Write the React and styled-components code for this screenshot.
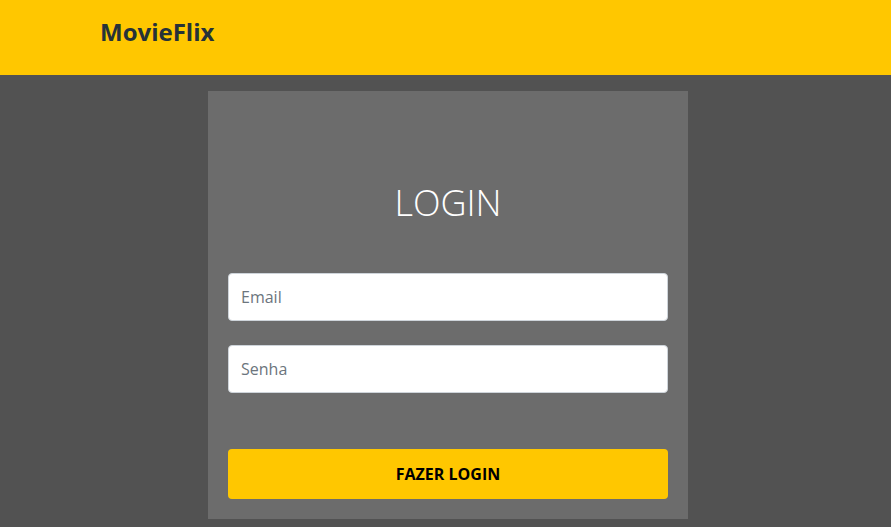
import React from 'react';
import styled, { createGlobalStyle } from 'styled-components';

const GlobalStyle = createGlobalStyle`
  * { box-sizing: border-box; }
  body {
    margin: 0;
    background: #525252;
    font-family: "Open Sans", "Liberation Sans", sans-serif;
  }
`;

export default function App() {
  return (
    <>
      <GlobalStyle />
      <Navbar>
        <Logo>MovieFlix</Logo>
      </Navbar>
      <Main>
        <Card>
          <Title>LOGIN</Title>
          <Form onSubmit={(e) => e.preventDefault()}>
            <Input type="email" placeholder="Email" />
            <Input type="password" placeholder="Senha" />
            <Button type="submit">Fazer login</Button>
          </Form>
        </Card>
      </Main>
    </>
  );
}

const Navbar = styled.header`
  height: 75px;
  background: #ffc700;
  display: flex;
  align-items: center;
  padding-left: 100px;
`;

const Logo = styled.h1`
  margin: 0 0 12px;
  font-size: 24px;
  font-weight: 700;
  color: #263238;
`;

const Main = styled.main`
  display: flex;
  justify-content: center;
  padding: 16px 0 0 5px;
`;

const Card = styled.section`
  width: 480px;
  background: #6c6c6c;
  padding: 87px 20px 20px;
`;

const Title = styled.h2`
  margin: 0 0 45px;
  text-align: center;
  font-size: 36px;
  font-weight: 300;
  line-height: 50px;
  color: #ffffff;
`;

const Form = styled.form`
  display: flex;
  flex-direction: column;
  gap: 24px;
`;

const Input = styled.input`
  height: 48px;
  padding: 0 12px;
  border: 1px solid #ced4da;
  border-radius: 4px;
  background: #ffffff;
  font-family: inherit;
  font-size: 16px;
  color: #495057;
  outline: none;

  &::placeholder {
    color: #6c757d;
  }
`;

const Button = styled.button`
  margin-top: 32px;
  height: 50px;
  border: none;
  border-radius: 4px;
  background: #ffc700;
  font-family: inherit;
  font-size: 16px;
  font-weight: 700;
  text-transform: uppercase;
  color: #000000;
  cursor: pointer;
`;
